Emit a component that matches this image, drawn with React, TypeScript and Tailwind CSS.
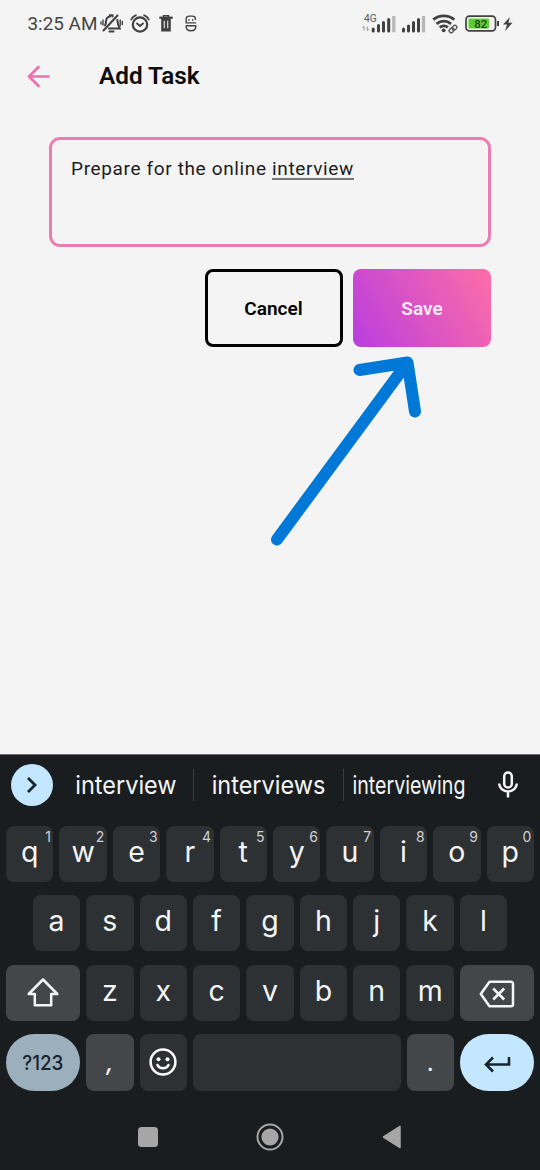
import type { ReactNode } from "react";

const topKeys = ["q", "w", "e", "r", "t", "y", "u", "i", "o", "p"];
const homeKeys = ["a", "s", "d", "f", "g", "h", "j", "k", "l"];
const bottomKeys = ["z", "x", "c", "v", "b", "n", "m"];

function StatusBar() {
  return (
    <div className="flex h-[48px] shrink-0 items-center pl-[27.5px] text-[#444]">
      <span className="w-[72.5px] pt-[1px] whitespace-nowrap text-[18.9px] leading-none">3:25 AM</span>
      <svg width="105" height="24" viewBox="0 0 105 24" fill="none" stroke="#404040" strokeWidth="1.8" strokeLinecap="round">
        <path d="M3.5 18.5 17.5 3.5" strokeWidth="2" />
        <path d="M5 13.5c.8-1.2 1-2.400 1-4.200C6.200 6.300 8 4.600 10 4.400V3.200h2.500v1.200M17.300 8c.4 3.800.8 5.800 2.400 8.600H9" strokeWidth="2" />
        <path d="M9.500 19.500h4" strokeWidth="2" />
        <path d="M3 8v5M20.200 8v6M1 10v2M22.300 9.500v3" strokeWidth="1.400" />
        <circle cx="40" cy="12.500" r="7.200" strokeWidth="2.200" />
        <path d="m37 11.500 3 2.500 3-2.500" strokeWidth="1.900" />
        <path d="M31.300 7.300c1-2 2.500-3.400 4.500-4M48.700 7.300c-1-2-2.500-3.400-4.500-4" strokeWidth="1.900" />
        <path d="M59.300 5.700h13.400" strokeWidth="2.200" strokeLinecap="butt" />
        <path d="M63.500 5V3.800h5V5" strokeWidth="1.500" />
        <path d="M61.200 6h9.600v13.400h-9.600z" fill="#404040" stroke="none" />
        <path d="M64.300 8.700v7.500M67.700 8.700v7.500" stroke="#ddd" strokeWidth="1.200" strokeLinecap="butt" />
        <path d="M95.500 10.900H86.200V6.800c0-1.700 1.400-2.700 3-2.700h3c1.700 0 3.200 1 3.200 2.700v.6M86.200 13.700h9.500v1c0 2.400-2 4-4.700 4s-4.800-1.600-4.800-4" strokeWidth="1.400" />
        <path d="M89 7.700v.5M92.700 7.700v.5" strokeWidth="1.400" />
      </svg>
      <svg className="ml-[154.700px]" width="156" height="30" viewBox="360 9 156 30" fill="none">
        <text x="364" y="22" fontSize="10.200" fill="#555" className="font-[Roboto,sans-serif]">4G</text>
        <path d="M364 30.500v-4m-1.500 1.500 1.500-1.800M367.300 26.500v4m1.500-1.500-1.500 1.800" stroke="#999" strokeWidth="1" />
        <path d="M373.200 31v-2M378.500 31v-5.500M383.500 31v-8.500M388.700 31V19.500" stroke="#404040" strokeWidth="3" strokeLinecap="round" />
        <path d="M393.800 32.300V16" stroke="#b8b8b8" strokeWidth="3.300" />
        <path d="M403.500 31v-2M408.500 31v-5M413.500 31v-8.500M418.500 31V19.500" stroke="#404040" strokeWidth="3" strokeLinecap="round" />
        <path d="M423.500 32.300V16" stroke="#b8b8b8" strokeWidth="3.300" />
        <path d="M433.300 19.600c6.200-5 14.800-5 21 0M436.500 23.800c4.400-3.400 10.200-3.400 14.600 0M439.700 27.400c2.600-1.900 5.600-1.900 8.200 0" stroke="#404040" strokeWidth="2.800" />
        <circle cx="443.700" cy="30.300" r="1.900" fill="#404040" />
        <g stroke="#555" strokeWidth="1.300" transform="rotate(-42 453 29)">
          <rect x="448.500" y="27" width="5.200" height="4" rx="2" />
          <rect x="452.300" y="27" width="5.200" height="4" rx="2" />
        </g>
        <rect x="466" y="16.200" width="29.500" height="14.600" rx="3.500" stroke="#404040" strokeWidth="1.700" />
        <rect x="468.500" y="18.600" width="20.500" height="9.800" rx="1" fill="#5ccc35" />
        <text x="474.300" y="27.600" fontSize="11.300" fill="#223c18" fontWeight="500" className="font-[Roboto,sans-serif]">82</text>
        <path d="M498 21v5" stroke="#404040" strokeWidth="2" />
        <path d="m510 17-7 7.500h4l-1.800 6.500 7.200-8.300h-4.100z" fill="#404040" />
      </svg>
    </div>
  );
}

function Key({ children, hint, tone = "bg-[#2e3134]" }: { children: ReactNode; hint?: string; tone?: string }) {
  return (
    <div className={`relative flex h-full w-[47.400px] shrink-0 justify-center rounded-[8px] pt-[6px] text-[28.500px] leading-[40px] ${tone}`}>
      {children}
      {hint && <span className="absolute top-[3px] right-[2.500px] text-[14px] leading-[16px] text-[#d0d2d4]">{hint}</span>}
    </div>
  );
}

function Keyboard() {
  return (
    <div className="flex h-[416px] shrink-0 flex-col border-t border-[#6b6d70] bg-[#1a1d20] font-[Inter,sans-serif] text-[#f4f5f7]">
      <div className="flex h-[60px] items-center pl-[11px] text-[25px]">
        <div className="flex size-[42px] items-center justify-center rounded-full bg-[#c2e7ff]">
          <svg width="14" height="20" viewBox="0 0 14 20" fill="none" stroke="#17252f" strokeWidth="2.800">
            <path d="m3 3 7 7-7 7" />
          </svg>
        </div>
        <div className="flex h-[32px] w-[141px] items-center justify-center border-r border-[#3a3d40] pl-[5px]">
          <span className="inline-block scale-x-[.94] pt-[1px]">interview</span>
        </div>
        <div className="flex h-[32px] w-[150px] items-center justify-center border-r border-[#3a3d40]">
          <span className="inline-block scale-x-[.94] pt-[1px]">interviews</span>
        </div>
        <div className="flex h-[32px] w-[130px] items-center justify-center">
          <span className="inline-block scale-x-[.785] pt-[1px]">interviewing</span>
        </div>
        <svg className="ml-[23px]" width="22" height="30" viewBox="0 0 22 30" fill="none" stroke="#f4f5f7" strokeWidth="2.500">
          <rect x="7.200" y="2.500" width="7.600" height="15" rx="3.800" />
          <path d="M2.200 13.500a8.800 8 0 0 0 17.600 0M11 21.500v6" />
        </svg>
      </div>
      <div className="flex flex-col gap-[13.400px] px-[6px] pt-[10.800px]">
        <div className="flex h-[56px] gap-[6px]">
          {topKeys.map((k, i) => <Key key={k} hint={String((i + 1) % 10)}>{k}</Key>)}
        </div>
        <div className="flex h-[56px] justify-center gap-[6px]">
          {homeKeys.map((k) => <Key key={k}>{k}</Key>)}
        </div>
        <div className="flex h-[56px] gap-[6px]">
          <div className="flex flex-1 items-center justify-center rounded-[8px] bg-[#444749]">
            <svg width="34" height="32" viewBox="0 0 34 32" fill="none" stroke="#f4f5f7" strokeWidth="2.500" strokeLinejoin="round">
              <path d="M17 2.500 31.300 17h-6.100v11.300H8.800V17H2.700z" />
            </svg>
          </div>
          {bottomKeys.map((k) => <Key key={k}>{k}</Key>)}
          <div className="flex flex-1 items-center justify-center rounded-[8px] bg-[#444749]">
            <svg className="mt-[2px]" width="36" height="30" viewBox="0 0 36 30" fill="none" stroke="#f4f5f7" strokeWidth="2.500" strokeLinejoin="round">
              <path d="M10.500 2.700H32a2 2 0 0 1 2 2v20.600a2 2 0 0 1-2 2H10.500L1.800 15z" />
              <path d="m14.200 9.500 11 11m0-11-11 11" />
            </svg>
          </div>
        </div>
        <div className="flex h-[57.500px] gap-[6px]">
          <div className="flex flex-1 items-center justify-center rounded-full bg-[#9cafbd] text-[20px] font-medium text-[#17252f]">
            <span className="inline-block scale-x-[.94]">?123</span>
          </div>
          <Key tone="bg-[#444749]"><span className="pt-[3px] text-[24px] font-medium italic">,</span></Key>
          <Key>
            <svg className="mt-[7.500px]" width="30" height="30" viewBox="0 0 30 30" fill="none" stroke="#fff" strokeWidth="2.500">
              <circle cx="15" cy="15" r="12.400" />
              <path d="M9.500 18c2 4.300 9 4.300 11 0" strokeLinecap="round" />
              <circle cx="10.500" cy="12.200" r="2" fill="#fff" stroke="none" />
              <circle cx="19.500" cy="12.200" r="2" fill="#fff" stroke="none" />
            </svg>
          </Key>
          <div className="w-[207.600px] rounded-[8px] bg-[#2e3134]" />
          <Key tone="bg-[#444749]"><span className="pt-[3px] text-[24px]">.</span></Key>
          <div className="flex flex-1 items-center justify-center rounded-full bg-[#c2e7ff]">
            <svg width="28" height="20" viewBox="0 0 28 20" fill="none" stroke="#17252f" strokeWidth="2.600">
              <path d="M26 4v7.500H3M10 4.500l-7 7 7 7" />
            </svg>
          </div>
        </div>
      </div>
      <div className="flex flex-1 items-center pt-[13px] pl-[137.500px]">
        <div className="size-[20.500px] rounded-[3.500px] bg-[#a6a6a9]" />
        <svg className="ml-[98px]" width="28" height="28" viewBox="0 0 28 28">
          <circle cx="14" cy="14" r="12.500" fill="none" stroke="#a6a6a9" strokeWidth="2" />
          <circle cx="14" cy="14" r="8.600" fill="#a6a6a9" />
        </svg>
        <svg className="ml-[97.500px]" width="20" height="24" viewBox="0 0 20 24">
          <path d="M18 1.500v21L1.500 12z" fill="#a6a6a9" stroke="#a6a6a9" strokeWidth="1.500" strokeLinejoin="round" />
        </svg>
      </div>
    </div>
  );
}

export default function App() {
  return (
    <div className="relative flex h-[1170px] w-[540px] flex-col overflow-hidden bg-[#f4f4f4] font-[Roboto,sans-serif]">
      <StatusBar />
      <header className="flex h-[56px] items-center pl-[27px]">
        <svg width="24" height="24" viewBox="0 0 24 24" fill="none" stroke="#f070ae" strokeWidth="2.700" strokeLinecap="round" strokeLinejoin="round">
          <path d="M21.500 12.500H2M11.500 3 2 12.500l9.500 9.500" />
        </svg>
        <h1 className="ml-[48px] text-[24.300px] leading-none font-semibold text-[#0d0d0d]">Add Task</h1>
      </header>
      <main className="flex-1 px-[49px] pt-[33px]">
        <div className="h-[110px] rounded-[11px] border-[3px] border-[#eb7db1] px-[19px] pt-[17px] text-[19px] leading-[24px] tracking-[.640px] text-[#1c1c1c]">
          Prepare for the online{" "}
          <span className="underline decoration-[#777] decoration-[1.500px] underline-offset-[3px]">interview</span>
        </div>
        <div className="mt-[22px] flex justify-end gap-[10.500px]">
          <button className="h-[78px] w-[138px] rounded-[8px] border-[3px] border-black pt-[2px] text-[19px] font-semibold text-black">Cancel</button>
          <button className="h-[78px] w-[138px] rounded-[8px] bg-linear-[60deg,#b93ddf,#ff6ea6] pt-[2px] text-[19px] font-semibold text-[#fbeafa]">Save</button>
        </div>
      </main>
      <svg className="absolute top-[350px] left-[265px]" width="165" height="205" viewBox="265 350 165 205" fill="none" stroke="#0078d7" strokeWidth="12" strokeLinecap="round" strokeLinejoin="round">
        <path d="M277 539.500 407.500 362.500M359.500 370l48-7.500 7.500 49" />
      </svg>
      <Keyboard />
    </div>
  );
}
